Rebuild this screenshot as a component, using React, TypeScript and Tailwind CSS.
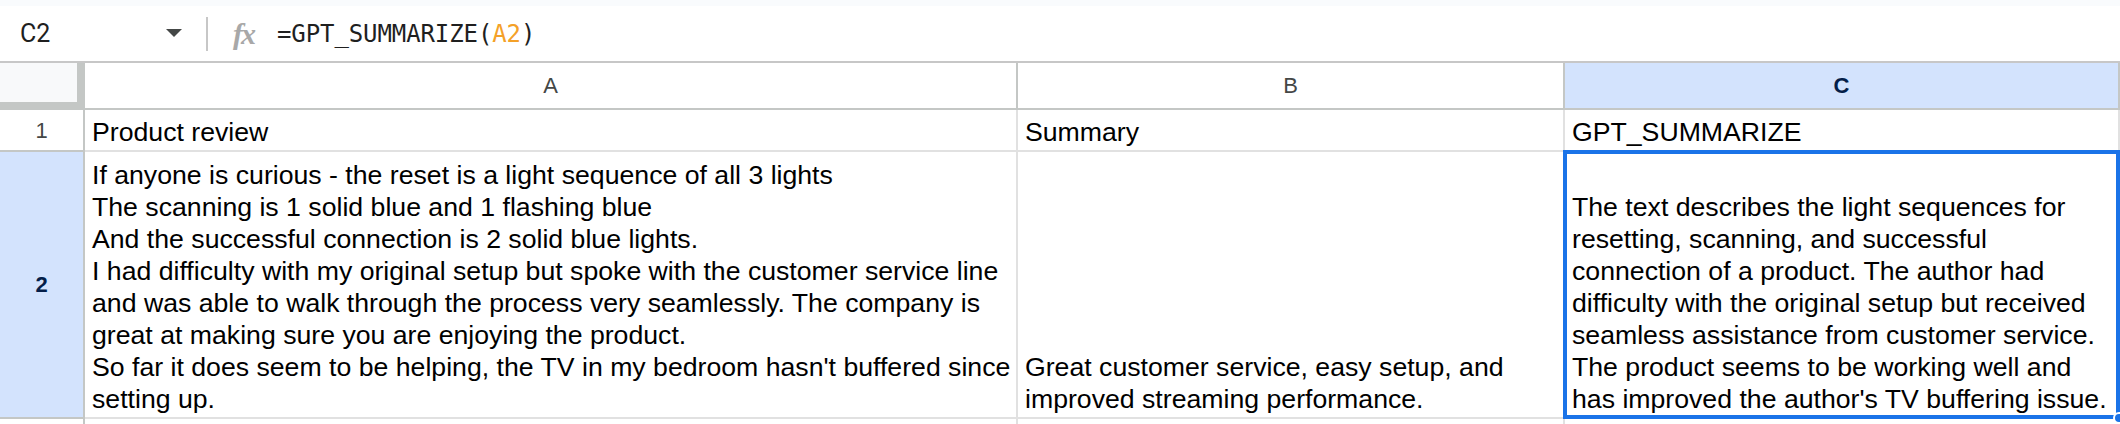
import React from 'react';

const cellFont = "font-['Liberation_Sans',Arial,sans-serif]";

const reviewLines = [
  'If anyone is curious - the reset is a light sequence of all 3 lights',
  'The scanning is 1 solid blue and 1 flashing blue',
  'And the successful connection is 2 solid blue lights.',
  'I had difficulty with my original setup but spoke with the customer service line',
  'and was able to walk through the process very seamlessly. The company is',
  'great at making sure you are enjoying the product.',
  "So far it does seem to be helping, the TV in my bedroom hasn't buffered since",
  'setting up.',
];

const summaryLines = ['Great customer service, easy setup, and', 'improved streaming performance.'];

const gptLines = [
  'The text describes the light sequences for',
  'resetting, scanning, and successful',
  'connection of a product. The author had',
  'difficulty with the original setup but received',
  'seamless assistance from customer service.',
  'The product seems to be working well and',
  "has improved the author's TV buffering issue.",
];

function Lines({ lines }: { lines: string[] }) {
  return (
    <div className="flex flex-col justify-end h-full px-[7px] pb-[2px]">
      {lines.map((l, i) => (
        <div key={i} className="whitespace-nowrap leading-[32px]">
          {l}
        </div>
      ))}
    </div>
  );
}

function FormulaBar() {
  return (
    <div className="h-[57px] bg-white flex items-center border-b-2 border-[#c7c7c7]">
      <div className="w-[200px] flex items-center pl-[20px] pr-[18px] justify-between">
        <span className="font-['Roboto',sans-serif] text-[25px] text-[#1f1f1f]">C2</span>
        <svg width="16" height="9" viewBox="0 0 16 9">
          <path d="M0 0h16L8 8z" fill="#444746" />
        </svg>
      </div>
      <div className="w-[2px] h-[34px] bg-[#c7c7c7] ml-[6px]" />
      <span className="ml-[25px] font-['Liberation_Serif',serif] italic font-bold text-[30px] text-[#a8a8a8] tracking-[-2px] leading-none">
        fx
      </span>
      <span className="ml-[23px] font-['DejaVu_Sans_Mono',monospace] text-[24px] tracking-[-0.1px] text-[#1f1f1f]">
        =GPT_SUMMARIZE(<span className="text-[#f4a128]">A2</span>)
      </span>
    </div>
  );
}

export default function App() {
  return (
    <div className="w-[2120px] h-[424px] overflow-hidden bg-white">
      <div className="h-[6px] bg-[#f9fbfd]" />
      <FormulaBar />
      <div
        className={`grid grid-cols-[85px_933px_547px_555px] grid-rows-[47px_42px_267px_20px] ${cellFont} text-[26.67px] text-black`}
      >
        {/* header row */}
        <div className="bg-[#f8f9fa] border-r-[8px] border-b-[8px] border-[#c4c7c5]" />
        <div className="flex items-center justify-center border-r-2 border-b-2 border-[#c4c7c5] text-[22px] text-[#444746]">
          A
        </div>
        <div className="flex items-center justify-center border-r-2 border-b-2 border-[#c4c7c5] text-[22px] text-[#444746]">
          B
        </div>
        <div className="flex items-center justify-center border-r-2 border-b-2 border-[#c4c7c5] bg-[#d3e3fd] text-[22px] font-bold text-[#041e49]">
          C
        </div>

        {/* row 1 */}
        <div className="flex items-center justify-center border-r-2 border-b-2 border-[#c4c7c5] text-[22px] text-[#444746]">
          1
        </div>
        <div className="border-r-2 border-b-2 border-[#e1e1e1]">
          <Lines lines={['Product review']} />
        </div>
        <div className="border-r-2 border-b-2 border-[#e1e1e1]">
          <Lines lines={['Summary']} />
        </div>
        <div className="border-r-2 border-b-2 border-[#e1e1e1]">
          <Lines lines={['GPT_SUMMARIZE']} />
        </div>

        {/* row 2 */}
        <div className="flex items-center justify-center border-r-2 border-b-2 border-[#c4c7c5] bg-[#d3e3fd] text-[22px] font-bold text-[#041e49]">
          2
        </div>
        <div className="border-r-2 border-b-2 border-[#e1e1e1]">
          <Lines lines={reviewLines} />
        </div>
        <div className="border-r-2 border-b-2 border-[#e1e1e1]">
          <Lines lines={summaryLines} />
        </div>
        <div className="relative border-r-2 border-b-2 border-[#e1e1e1]">
          <Lines lines={gptLines} />
          <div className="absolute -left-[2px] -top-[2px] -right-[2px] -bottom-[2px] border-[4px] border-[#1a73e8] pointer-events-none" />
          <div className="absolute -right-[7px] -bottom-[7px] w-[12px] h-[12px] rounded-full bg-[#1a73e8] border-2 border-white" />
        </div>

        {/* row 3 */}
        <div className="border-r-2 border-[#c4c7c5]" />
        <div className="border-r-2 border-[#e1e1e1]" />
        <div className="border-r-2 border-[#e1e1e1]" />
        <div />
      </div>
    </div>
  );
}
